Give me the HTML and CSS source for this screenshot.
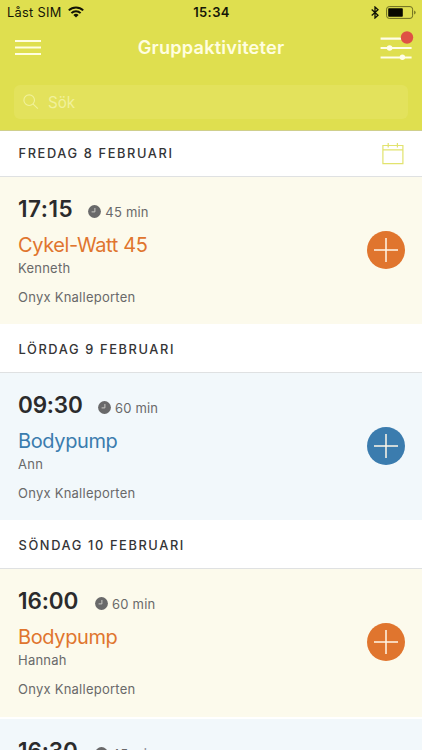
FILE: index.html
```
<!DOCTYPE html>
<html lang="sv">
<head>
<meta charset="utf-8">
<title>Gruppaktiviteter</title>
<link rel="stylesheet" href="styles.css">
</head>
<body>
<svg width="0" height="0" class="defs">
  <symbol id="clock" viewBox="0 0 13 13"><circle cx="6.5" cy="6.5" r="6.4" fill="#69696a"/><path d="M6.9 3v3.9H3.6" fill="none" stroke="#c9c9c5" stroke-width="1"/></symbol>
  <symbol id="plus" viewBox="0 0 38 38"><path d="M19 7v24M7 19h24" fill="none" stroke="#fff6e8" stroke-width="1.5"/></symbol>
</svg>
<div class="screen">
  <header class="top">
    <div class="status">
      <div class="carrier"><span>Låst SIM</span>
        <svg width="16" height="12" viewBox="0 0 16 12"><g fill="none" stroke="#111205" stroke-width="2"><path d="M.8 4.4a10.3 10.3 0 0 1 14.4 0"/><path d="M3.4 7.1a6.6 6.6 0 0 1 9.2 0"/></g><path d="M5.4 9a3.8 3.8 0 0 1 5.2 0L8 11.6z" fill="#111205"/></svg>
      </div>
      <div class="clock">15:34</div>
      <div class="power">
        <svg width="8" height="13" viewBox="0 0 8 13"><path d="M.7 3.6l6.3 5.6L4 12V1l3 2.8L.7 9.4" fill="none" stroke="#111205" stroke-width="1.3"/></svg>
        <svg width="30" height="13" viewBox="0 0 30 13"><rect x=".6" y=".6" width="26" height="11.8" rx="2.6" fill="none" stroke="#6c6d20" stroke-width="1"/><rect x="2.2" y="2.2" width="14.6" height="8.6" rx=".8" fill="#080800"/><path d="M28.2 4.6q1.4.5 1.4 1.9t-1.4 1.9z" fill="#6c6d20"/></svg>
      </div>
    </div>
    <div class="nav">
      <svg class="burger" width="26" height="17" viewBox="0 0 26 17"><path d="M0 2h26M0 8.5h26M0 15h26" stroke="#fffee0" stroke-width="2.1"/></svg>
      <h1>Gruppaktiviteter</h1>
      <svg class="filter" width="34" height="32" viewBox="0 0 34 32"><path d="M.6 10.6h31M.6 20h31M.6 29.5h31" stroke="#fffee8" stroke-width="2.2"/><circle cx="9.6" cy="20" r="2.8" fill="#fffee8"/><circle cx="22.4" cy="29.3" r="2.7" fill="#fffee8"/><circle cx="27" cy="9.5" r="6.2" fill="#df5145"/></svg>
    </div>
    <div class="search">
      <svg width="16" height="16" viewBox="0 0 16 16"><g fill="none" stroke="#f1f19a" stroke-width="1.1"><circle cx="6.2" cy="6.2" r="5.3"/><path d="M9.9 9.9l5 4.8"/></g></svg>
      <span>Sök</span>
    </div>
  </header>

  <main>
    <h2 class="day first"><span>FREDAG 8 FEBRUARI</span>
      <svg class="calendar" width="22" height="22" viewBox="0 0 22 22"><g fill="none" stroke="#e2e36e" stroke-width="1.2"><path d="M.9 2.5h20v18.2H.9zM.9 6.9h20M6.2 0v4.4M15.4 0v4.4"/></g></svg>
    </h2>
    <article class="card warm">
      <div class="when"><span class="time t1">17:15</span><svg class="dur" width="13" height="13"><use href="#clock"/></svg><span class="min">45 min</span></div>
      <div class="name">Cykel-Watt 45</div>
      <div class="text">Kenneth</div>
      <div class="text place">Onyx Knalleporten</div>
      <div class="add"><svg width="38" height="38"><use href="#plus"/></svg></div>
    </article>

    <h2 class="day">LÖRDAG 9 FEBRUARI</h2>
    <article class="card cool">
      <div class="when"><span class="time t2">09:30</span><svg class="dur" width="13" height="13"><use href="#clock"/></svg><span class="min">60 min</span></div>
      <div class="name">Bodypump</div>
      <div class="text">Ann</div>
      <div class="text place">Onyx Knalleporten</div>
      <div class="add"><svg width="38" height="38"><use href="#plus"/></svg></div>
    </article>

    <h2 class="day">SÖNDAG 10 FEBRUARI</h2>
    <article class="card warm">
      <div class="when"><span class="time t3">16:00</span><svg class="dur" width="13" height="13"><use href="#clock"/></svg><span class="min">60 min</span></div>
      <div class="name">Bodypump</div>
      <div class="text">Hannah</div>
      <div class="text place">Onyx Knalleporten</div>
      <div class="add"><svg width="38" height="38"><use href="#plus"/></svg></div>
    </article>
    <article class="card cool next">
      <div class="when"><span class="time t3">16:30</span><svg class="dur" width="13" height="13"><use href="#clock"/></svg><span class="min">45 min</span></div>
    </article>
  </main>
</div>
</body>
</html>
```
FILE: styles.css
```
* { box-sizing: border-box; }
body { margin: 0; font-family: Inter, "Liberation Sans", sans-serif; background: #fff; }
svg { display: block; flex: none; }
.defs { position: absolute; }
.screen { width: 422px; height: 750px; overflow: hidden; }

.top { position: relative; z-index: 1; height: 131px; background: #dfdf4f; border-bottom: 1px solid #cfcf8c; }
.status { display: grid; grid-template-columns: 1fr auto 1fr; height: 24px; align-items: center; padding: 0 6px 0 7px; color: #151606; font-size: 12.8px; }
.carrier { display: flex; align-items: center; gap: 6px; letter-spacing: .3px; }
.clock { font-weight: 600; font-size: 13px; letter-spacing: .4px; }
.power { display: flex; justify-content: flex-end; align-items: center; gap: 7px; }
.nav { display: grid; grid-template-columns: 34px 1fr 34px; height: 47px; align-items: center; padding: 0 8px 0 15px; }
h1 { margin: -2px 7px 0 0; text-align: center; font-size: 18.2px; font-weight: 600; letter-spacing: .2px; color: #fffee0; line-height: 24px; }
.filter { margin-top: -7px; }
.search { display: flex; align-items: center; gap: 9px; height: 34px; margin: 14px 14px 0; padding: 0 9px; border-radius: 6px; background: #e3e25c; color: #f1f19a; font-size: 15.2px; }

.day { display: flex; align-items: center; justify-content: space-between; margin: 0; height: 49px; padding: 3px 18px 0 18.5px; background: #fff; border-bottom: 1px solid #dfe1e2; color: #343436; font-size: 12.8px; font-weight: 500; letter-spacing: 1.63px; }
.first { margin-top: -3px; }
.card { position: relative; height: 147px; padding: 18px; }
.warm { background: #fcfaec; --accent: #e0752e; }
.cool { background: #f2f8fb; --accent: #3b7cae; }
.warm:nth-last-child(2) { height: 148px; }
.next { margin-top: 2px; padding-top: 18px; }
.when { display: flex; align-items: center; height: 28px; }
.time { font-size: 22.5px; font-weight: 600; color: #2b2b2c; line-height: 28px; }
.t1 { letter-spacing: .5px; }
.t2 { letter-spacing: -.2px; }
.t3 { letter-spacing: -.1px; margin-right: 1.5px; }
.dur { margin: 4px 4px 0 15.3px; }
.min { font-size: 13px; letter-spacing: .2px; color: #69696a; line-height: 18px; margin-top: 5px; }
.name { margin-top: 8px; font-size: 20px; letter-spacing: -.38px; line-height: 28px; color: var(--accent); }
.text { font-size: 13px; letter-spacing: .24px; line-height: 18px; color: #69696a; }
.place { margin-top: 11px; }
.add { position: absolute; right: 17px; top: 54px; width: 38px; height: 38px; border-radius: 50%; background: var(--accent); }
```
